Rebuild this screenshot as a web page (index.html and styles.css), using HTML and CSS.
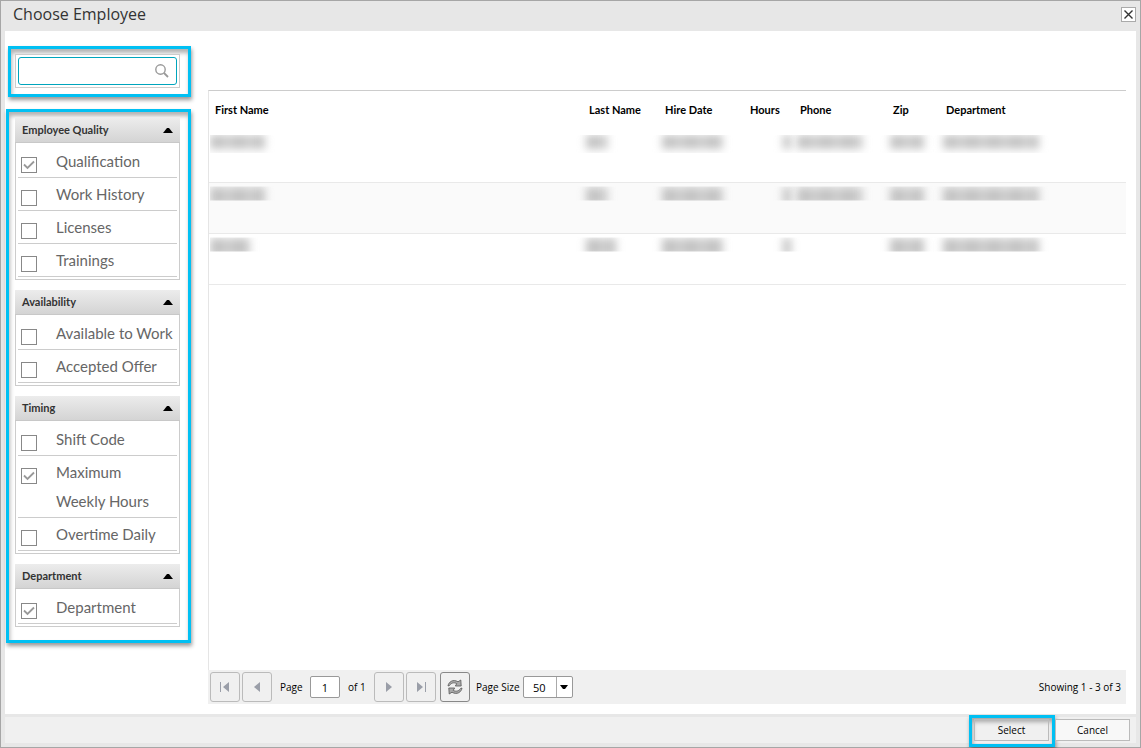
FILE: index.html
```html
<!DOCTYPE html>
<html lang="en">
<head>
<meta charset="utf-8">
<title>Choose Employee</title>
<link rel="stylesheet" href="styles.css">
</head>
<body>
<div class="dialog" role="dialog" aria-labelledby="title">
  <header class="titlebar">
    <h1 id="title">Choose Employee</h1>
    <button class="close" type="button" aria-label="Close"><svg width="9" height="9" viewBox="0 0 9 9"><path d="M.5.5l8 8M8.500.5l-8 8" stroke="#333" stroke-width="1.400"/></svg></button>
  </header>
  <main class="content">
    <aside class="sidebar">
      <div class="highlight search-area">
        <div class="search-frame">
          <label class="search"><input type="text" aria-label="Search employees"><svg width="14" height="14" viewBox="0 0 14 14" fill="none" stroke="#999"><circle cx="5.500" cy="5.500" r="4.700" stroke-width="1.400"/><path d="M9 9l4 4" stroke-width="1.800"/></svg></label>
        </div>
      </div>
      <div class="highlight filters">
        <section class="panel">
          <h2>Employee Quality <svg width="10" height="5" viewBox="0 0 10 5"><path d="M0 5L4 0h2l4 5z"/></svg></h2>
          <ul>
            <li><input type="checkbox" id="f1" checked><label for="f1">Qualification</label></li>
            <li><input type="checkbox" id="f2"><label for="f2">Work History</label></li>
            <li><input type="checkbox" id="f3"><label for="f3">Licenses</label></li>
            <li><input type="checkbox" id="f4"><label for="f4">Trainings</label></li>
          </ul>
        </section>
        <section class="panel">
          <h2>Availability <svg width="10" height="5" viewBox="0 0 10 5"><path d="M0 5L4 0h2l4 5z"/></svg></h2>
          <ul>
            <li><input type="checkbox" id="f5"><label for="f5">Available to Work</label></li>
            <li><input type="checkbox" id="f6"><label for="f6">Accepted Offer</label></li>
          </ul>
        </section>
        <section class="panel">
          <h2>Timing <svg width="10" height="5" viewBox="0 0 10 5"><path d="M0 5L4 0h2l4 5z"/></svg></h2>
          <ul>
            <li><input type="checkbox" id="f7"><label for="f7">Shift Code</label></li>
            <li><input type="checkbox" id="f8" checked><label for="f8">Maximum <span class="keep">Weekly Hours</span></label></li>
            <li><input type="checkbox" id="f9"><label for="f9">Overtime Daily</label></li>
          </ul>
        </section>
        <section class="panel">
          <h2>Department <svg width="10" height="5" viewBox="0 0 10 5"><path d="M0 5L4 0h2l4 5z"/></svg></h2>
          <ul>
            <li><input type="checkbox" id="f10" checked><label for="f10">Department</label></li>
          </ul>
        </section>
      </div>
    </aside>
    <section class="grid">
      <table>
        <colgroup><col><col class="c-last"><col class="c-hire"><col class="c-hours"><col class="c-phone"><col class="c-zip"><col class="c-dept"></colgroup>
        <thead>
          <tr><th>First Name</th><th>Last Name</th><th>Hire Date</th><th>Hours</th><th>Phone</th><th>Zip</th><th>Department</th></tr>
        </thead>
        <tbody>
          <tr class="first">
            <td><span class="mask w-first"></span></td><td><span class="mask w-last"></span></td><td><span class="mask w-hire"></span></td><td><span class="mask w-hours"></span></td><td><span class="mask w-phone"></span></td><td><span class="mask w-zip"></span></td><td><span class="mask w-dept"></span></td>
          </tr>
          <tr class="alt">
            <td><span class="mask w-first"></span></td><td><span class="mask w-last"></span></td><td><span class="mask w-hire"></span></td><td><span class="mask w-hours"></span></td><td><span class="mask w-phone"></span></td><td><span class="mask w-zip"></span></td><td><span class="mask w-dept"></span></td>
          </tr>
          <tr>
            <td><span class="mask w-short"></span></td><td><span class="mask w-last-long"></span></td><td><span class="mask w-hire"></span></td><td><span class="mask w-hours"></span></td><td></td><td><span class="mask w-zip"></span></td><td><span class="mask w-dept"></span></td>
          </tr>
        </tbody>
      </table>
      <div class="pager">
        <button class="nav" type="button" aria-label="First page" disabled><svg width="10" height="10" viewBox="0 0 10 10" fill="#9a9ea8"><path d="M0 0h1v10H0zM9 0v10L3 5z"/></svg></button>
        <button class="nav" type="button" aria-label="Previous page" disabled><svg width="10" height="10" viewBox="0 0 10 10" fill="#9a9ea8"><path d="M8 0v10L2 5z"/></svg></button>
        <label class="page" for="page">Page</label>
        <input class="page-no" id="page" type="text" value="1">
        <span class="total">of 1</span>
        <button class="nav" type="button" aria-label="Next page" disabled><svg width="10" height="10" viewBox="0 0 10 10" fill="#9a9ea8"><path d="M2 0v10l6-5z"/></svg></button>
        <button class="nav" type="button" aria-label="Last page" disabled><svg width="10" height="10" viewBox="0 0 10 10" fill="#9a9ea8"><path d="M1 0v10l6-5zM9 0h1v10H9z"/></svg></button>
        <button class="nav refresh" type="button" aria-label="Refresh"><svg width="16" height="16" viewBox="0 0 16 16"><g fill="#aaa" stroke="#555" stroke-width=".8" stroke-linejoin="round"><path d="M1 7C1.500 3 6-.3 11 2.800L13.800 1l.4 6H8.300l1.500-2.300C7 3 4 4 2.500 6.500z"/><path d="M15 9C14.500 13 10 16.300 5 13.200L2.200 15l-.4-6h5.900l-1.500 2.300C9 13 12 12 13.500 9.500z"/></g></svg></button>
        <label class="size-label" for="size">Page Size</label>
        <span class="size"><select id="size"><option>50</option><option>100</option></select><svg width="8" height="4" viewBox="0 0 8 4"><path d="M0 0h8L5 4H3z"/></svg></span>
        <span class="status">Showing 1 - 3 of 3</span>
      </div>
    </section>
  </main>
  <footer class="actions">
    <div class="highlight select-area"><button class="action" type="button">Select</button></div>
    <button class="action" type="button">Cancel</button>
  </footer>
</div>
</body>
</html>
```

FILE: styles.css
```css
* { box-sizing: border-box; }
body { margin: 0; font-family: "Open Sans", "Noto Sans", sans-serif; font-size: 10px; color: #000; }
h1, h2, ul { margin: 0; padding: 0; font-weight: 400; }
button, input, select { font: inherit; color: inherit; margin: 0; }
svg { display: block; }

.dialog { min-height: 100vh; display: flex; flex-direction: column; background: #e7e7e7; border: 1px solid #a6a6a6; }
.titlebar { height: 30px; padding: 0 4px 0 12px; display: flex; align-items: center; justify-content: space-between; }
.titlebar h1 { font-size: 16px; line-height: 26px; color: #333; padding-bottom: 4px; }
.close { width: 15px; height: 15px; padding: 0; margin-bottom: 4px; background: #fff; border: 1px solid #aaa; display: grid; place-items: center; }

.content { flex: 1; margin: 0 4px; background: #fff; display: flex; gap: 17px; padding: 15px 10px 10px 1px; }
.sidebar { width: 185px; flex: none; display: flex; flex-direction: column; gap: 12px; }
.highlight { border: 3px solid #00c0f3; box-shadow: 1px 3px 4px rgba(0,0,0,.4), inset 1px 4px 4px rgba(0,0,0,.3); }
.search-area { margin-left: 2px; padding: 5px 8px 6px 4px; }
.search-frame { border: 1px solid #ccc; padding: 2px; background: #fff; }
.search { height: 28px; display: flex; align-items: center; border: 1px solid #00a5bd; border-radius: 3px; padding-right: 7px; }
.search input { flex: 1; min-width: 0; height: 24px; border: 0; outline: 0; background: none; font-size: 14px; padding: 0 6px; }
.filters { padding: 6px 8px 13px 6px; display: flex; flex-direction: column; gap: 10px; }
.panel { border: 1px solid #ccc; border-top: 0; }
.panel h2 { height: 25px; margin: 0 -1px; padding: 0 7px 2px; display: flex; align-items: center; justify-content: space-between; font-size: 11px; font-weight: 700; font-family: Lato, sans-serif; color: #333; background: linear-gradient(#ececec, #d4d4d4); border-bottom: 1px solid #c8c8c8; }
.panel h2 svg { fill: #000; margin-top: 2px; }
.panel ul { list-style: none; padding: 2px; }
.panel li { display: flex; align-items: flex-start; padding: 2px 0 1px 3px; border-bottom: 1px solid #ccc; }
.panel label { flex: 1; margin-left: 19px; font-family: Lato, sans-serif; font-size: 15px; line-height: 29px; color: #666; }
.keep { white-space: nowrap; }
.panel input { appearance: none; width: 16px; height: 16px; margin-top: 10px; background: #fff no-repeat center; border: 1px solid #888; }
.panel input:checked { background-image: url("data:image/svg+xml,%3Csvg xmlns='http://www.w3.org/2000/svg' width='12' height='10'%3E%3Cpath d='M1 4.500l3.500 3.500L11 1.500' fill='none' stroke='%23999' stroke-width='1.800'/%3E%3C/svg%3E"); }

.grid { flex: 1; min-width: 0; margin-top: 44px; display: flex; flex-direction: column; border-top: 1px solid #ccc; border-left: 1px solid #e5e5e5; }
table { width: 100%; table-layout: fixed; border-collapse: collapse; }
th { height: 40px; padding: 0 0 3px 6px; text-align: left; font-family: Lato, sans-serif; font-size: 11px; font-weight: 700; white-space: nowrap; }
td { height: 51px; padding: 4px 0 0 3px; vertical-align: top; border-bottom: 1px solid #e9e9e9; }
td:first-child { padding-left: 1px; }
.alt { background: #fafafa; }
.c-last { width: 76px; }
.c-hire { width: 85px; }
.c-hours { width: 50px; }
.c-phone { width: 93px; }
.c-zip { width: 53px; }
.c-dept { width: 186px; }
.mask { display: block; height: 14px; clip-path: inset(0 -12px); }
.mask::before { content: ""; display: block; height: 18px; background: repeating-linear-gradient(90deg, #c4c4c4 0 14px, #cfcfcf 14px 22px); filter: blur(4px); }
.first .mask { height: 18px; }
.first .mask::before { height: 14px; }
.w-first { width: 55px; clip-path: inset(0 -12px 0 0); }
.w-short { width: 40px; clip-path: inset(0 -12px 0 0); }
.w-last { width: 22px; }
.w-last-long { width: 30px; }
.w-hire { width: 61px; }
.w-hours { width: 8px; margin-left: 36px; }
.w-phone { width: 66px; }
.w-zip { width: 34px; }
.w-dept { width: 96px; }

.pager { margin: auto 0 0 -1px; height: 34px; padding: 0 5px 0 2px; display: flex; align-items: center; background: #f0f0f0; white-space: nowrap; }
.nav { width: 30px; height: 30px; padding: 0; display: grid; place-items: center; background: #f0f0f0; border: 1px solid #bbb; border-radius: 3px; }
.nav + .nav { margin-left: 2px; }
.nav + .refresh { margin-left: 4px; border-color: #888; }
.page { margin-left: 8px; width: 30px; }
.page-no { width: 30px; height: 22px; padding: 0; text-align: center; font-size: 11px; border: 1px solid #999; border-radius: 2px; background: #fff; }
.total { margin-left: 8px; width: 26px; }
.size-label { margin-left: 6px; width: 47px; }
.size { position: relative; width: 50px; height: 22px; background: #fff; border: 1px solid #999; border-radius: 2px; }
.size select { appearance: none; width: 33px; height: 20px; padding: 0 0 0 9px; border: 0; border-right: 1px solid #aaa; background: none; font-size: 11px; }
.size svg { position: absolute; right: 4px; top: 8px; pointer-events: none; }
.status { margin-left: auto; }

.actions { height: 31px; margin: 2px 4px 0; padding-right: 6px; display: flex; justify-content: flex-end; align-items: flex-start; background: linear-gradient(#f0f0f0, #f0f0f0) 0 1px / 100% 26px no-repeat; }
.select-area { height: 32px; padding: 1px 3px 1px 2px; margin-top: -1px; }
.action { width: 75px; height: 22px; padding: 0; margin-top: 3px; background: #f8f8f8; border: 1px solid #bbb; }
.select-area .action { margin-top: 0; background: none; }
```
